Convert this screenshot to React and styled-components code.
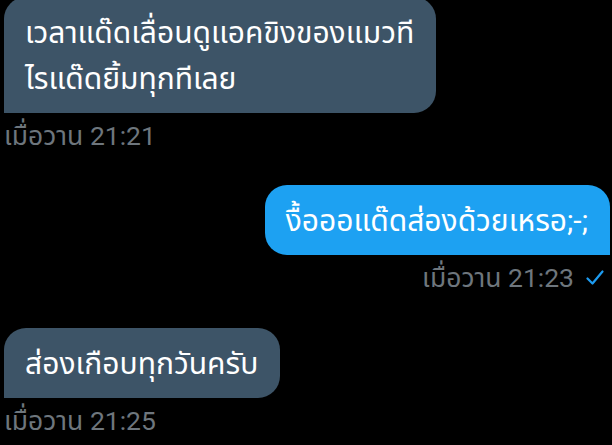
import React from "react";
import styled, { createGlobalStyle } from "styled-components";

const GlobalStyle = createGlobalStyle`
  html, body {
    margin: 0;
    padding: 0;
    background: #000000;
  }
  body {
    font-family: Roboto, "Noto Sans Thai", "Noto Sans", "DejaVu Sans", sans-serif;
    -webkit-font-smoothing: antialiased;
  }
`;

const Conversation = styled.div`
  display: flex;
  flex-direction: column;
  width: 612px;
  height: 445px;
  overflow: hidden;
  box-sizing: border-box;
  padding: 0 2px 0 4px;
  background: #000000;
`;

const Group = styled.div`
  display: flex;
  flex-direction: column;
  align-items: ${(p) => (p.$sent ? "flex-end" : "flex-start")};
  margin-top: ${(p) => p.$gap || 0}px;
`;

const Bubble = styled.div`
  box-sizing: border-box;
  padding: 13px 22px 11px 21px;
  font-size: 30px;
  line-height: 46px;
  color: #ffffff;
  white-space: nowrap;
  background: ${(p) => (p.$sent ? "#1da1f2" : "#3d5467")};
  border-radius: ${(p) => (p.$sent ? "22px 22px 0 22px" : "22px 22px 22px 0")};
`;

const Meta = styled.div`
  display: flex;
  align-items: center;
  gap: 12px;
  margin-top: 8px;
  padding-right: ${(p) => (p.$sent ? 6 : 0)}px;
  font-size: 26.5px;
  line-height: 30px;
  color: #6e767d;
`;

const Check = () => (
  <svg width="18" height="16" viewBox="0 0 18 16" fill="none">
    <path d="M1.5 8.5 L6.5 13.5 L16.5 1.5" stroke="#1d9bf0" strokeWidth="2.2" strokeLinecap="round" strokeLinejoin="round" />
  </svg>
);

export default function App() {
  return (
    <>
      <GlobalStyle />
      <Conversation>
        <Group $gap={-3}>
          <Bubble>
            เวลาแด๊ดเลื่อนดูแอคขิงของแมวที
            <br />
            ไรแด๊ดยิ้มทุกทีเลย
          </Bubble>
          <Meta>เมื่อวาน 21:21</Meta>
        </Group>
        <Group $sent $gap={34}>
          <Bubble $sent>งื้อออแด๊ดส่องด้วยเหรอ;-;</Bubble>
          <Meta $sent>
            เมื่อวาน 21:23 <Check />
          </Meta>
        </Group>
        <Group $gap={35}>
          <Bubble>ส่องเกือบทุกวันครับ</Bubble>
          <Meta>เมื่อวาน 21:25</Meta>
        </Group>
      </Conversation>
    </>
  );
}
